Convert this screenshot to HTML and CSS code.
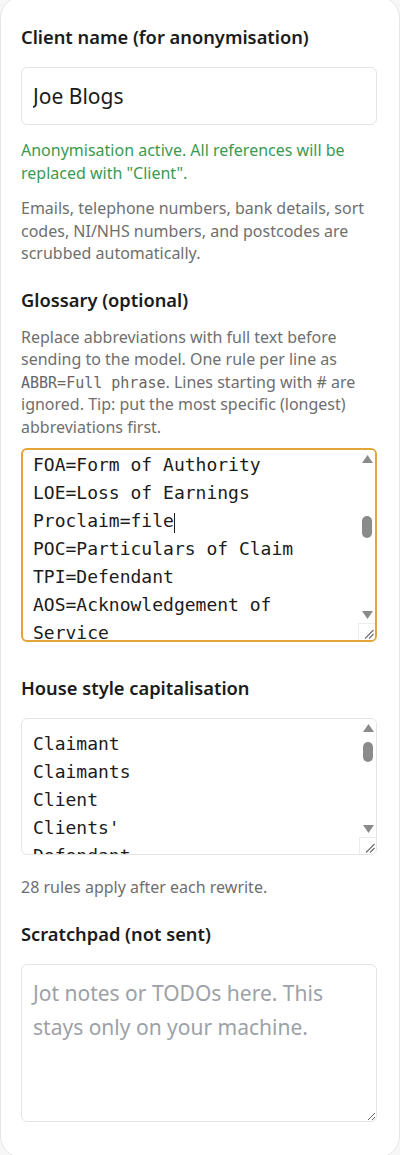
FILE: index.html
```html
<!DOCTYPE html>
<html lang="en">
<head>
<meta charset="utf-8">
<title>Settings</title>
<link rel="stylesheet" href="styles.css">
</head>
<body>
<div class="card">
  <section class="field">
    <label class="label" for="client">Client name (for anonymisation)</label>
    <input id="client" class="input" type="text" value="Joe Blogs">
    <p class="note note-ok">Anonymisation active. All references will be replaced with "Client".</p>
    <p class="note">Emails, telephone numbers, bank details, sort codes, NI/NHS numbers, and postcodes are scrubbed automatically.</p>
  </section>

  <section class="field field-glossary">
    <label class="label label-desc" for="glossary">Glossary (optional)</label>
    <p class="note desc">Replace abbreviations with full text before sending to the model. One rule per line as <code class="code">ABBR=Full phrase</code>. Lines starting with # are ignored. Tip: put the most specific (longest) abbreviations first.</p>
    <div class="box box-focus glossary">
      <textarea id="glossary" class="area area-mono" spellcheck="false"># Case abbreviations
CL=Claimant
CLs=Claimants
D=Defendant
Ds=Defendants
RTA=Road Traffic Accident
PI=Personal Injury
CNF=Claim Notification Form
LOC=Letter of Claim
LOR=Letter of Response
CPR=Civil Procedure Rules
DQ=Directions Questionnaire
CMC=Case Management
ATE=After the Event
GP=General Practitioner
MR=Medical Report
TP=Third Party
WS=Witness Statement
SOC=Statement of Case
DOI=Date of Incident
FOA=Form of Authority
LOE=Loss of Earnings
Proclaim=file
POC=Particulars of Claim
TPI=Defendant
AOS=Acknowledgement of Service
DJ=District Judge
CJ=Circuit Judge
SCO=Schedule of Costs
NOD=Notice of Discontinuance
NOI=Notice of Issue
OTS=Offer to Settle
P36=Part 36 Offer
PTR=Pre-Trial Review
LIP=Litigant in Person
MOJ=Ministry of Justice
CRU=Compensation Recovery Unit
NHS=National Health Service
A&amp;E=Accident and Emergency
TOM=Tomlin Order
CO=Consent Order
DOB=Date of Birth
DOK=Date of Knowledge
LOA=Letter of Acceptance
ROR=Request for Records
</textarea>
      <span class="caret"></span>
      <div class="sbar" aria-hidden="true">
        <span class="sbar-btn"><svg width="11" height="8" viewBox="0 0 11 8"><polygon points="0,8 5.5,0 11,8" fill="#8b8b8b"/></svg></span>
        <span class="sbar-track"><span class="sbar-thumb thumb-glossary"></span></span>
        <span class="sbar-btn"><svg width="11" height="8" viewBox="0 0 11 8"><polygon points="0,0 11,0 5.5,8" fill="#8b8b8b"/></svg></span>
        <span class="sbar-corner"><svg width="17" height="17" viewBox="0 0 17 17"><path d="M7 15.5 L15.5 7 M11 15.5 L15.5 11" stroke="#6e6e6e" stroke-width="1.1" fill="none"/></svg></span>
      </div>
    </div>
  </section>

  <section class="field">
    <label class="label" for="house">House style capitalisation</label>
    <div class="box house">
      <textarea id="house" class="area area-mono" spellcheck="false">Claimant
Claimants
Client
Clients'
Defendant
Defendants
Defendant's
Claimant's
Court
Judge
District Judge
Circuit Judge
Tribunal
Insurer
Insurers
Solicitor
Solicitors
Counsel
Expert
Experts
Particulars of Claim
Defence
Reply
Order
Schedule
Counter-Schedule
Part 36
Civil Procedure Rules</textarea>
      <div class="sbar" aria-hidden="true">
        <span class="sbar-btn"><svg width="11" height="8" viewBox="0 0 11 8"><polygon points="0,8 5.5,0 11,8" fill="#8b8b8b"/></svg></span>
        <span class="sbar-track"><span class="sbar-thumb thumb-house"></span></span>
        <span class="sbar-btn"><svg width="11" height="8" viewBox="0 0 11 8"><polygon points="0,0 11,0 5.5,8" fill="#8b8b8b"/></svg></span>
        <span class="sbar-corner"><svg width="17" height="17" viewBox="0 0 17 17"><path d="M7 15.5 L15.5 7 M11 15.5 L15.5 11" stroke="#6e6e6e" stroke-width="1.1" fill="none"/></svg></span>
      </div>
    </div>
    <p class="note count">28 rules apply after each rewrite.</p>
  </section>

  <section class="field">
    <label class="label" for="scratch">Scratchpad (not sent)</label>
    <textarea id="scratch" class="scratch" placeholder="Jot notes or TODOs here. This stays only on your machine."></textarea>
  </section>
</div>
<script src="script.js"></script>
</body>
</html>
```

FILE: styles.css
```css
* { box-sizing: border-box; }

html, body {
  margin: 0;
  padding: 0;
  background: #f7f7f7;
}

body {
  font-family: "Noto Sans", "Open Sans", sans-serif;
  color: #1b1b1b;
  height: 1155px;
  overflow: hidden;
}

.card {
  background: #fff;
  border: 1px solid #e6e6e6;
  border-radius: 22px;
  margin: -4px 0 0 0;
  width: 400px;
  min-height: 1162px;
  padding: 28px 22px 0 20px;
}

.field { margin: 0 0 23px 0; }
.field-glossary { margin-bottom: 34px; }

.label {
  display: block;
  font-size: 18.3px;
  font-weight: 600;
  line-height: 24px;
  margin: 0 0 18px 0;
}

.label-desc { margin-bottom: 14px; }

.input {
  display: block;
  width: 100%;
  height: 58px;
  border: 1px solid #e4e4e4;
  border-radius: 6px;
  padding: 0 11px;
  font-family: "Noto Sans", "Open Sans", sans-serif;
  font-size: 21px;
  color: #1b1b1b;
  background: #fff;
  outline: none;
}

.note {
  margin: 0;
  font-size: 16px;
  line-height: 22.5px;
  color: #6f6f6f;
}

.note-ok {
  color: #3a9a52;
  margin: 14px 0 13px 0;
}

.desc { margin-bottom: 10px; }

.code {
  font-family: "DejaVu Sans Mono", monospace;
  font-size: 15px;
  line-height: 1;
  color: #666;
}

.count { margin-top: 21px; }

/* textarea with drawn scrollbar */
.box {
  position: relative;
  display: flex;
  width: 100%;
  border: 1px solid #e4e4e4;
  border-radius: 6px;
  background: #fff;
  overflow: hidden;
}

.box-focus { border: 2px solid #e3a43a; }

.glossary { height: 194px; }
.house { height: 137px; }

.area {
  flex: 1;
  min-width: 0;
  height: 100%;
  margin: 0;
  border: 0;
  padding: 11px 6px 11px 11px;
  background: transparent;
  color: #1b1b1b;
  outline: none;
  resize: none;
  overflow: hidden;
}

.box-focus .area { padding: 10px 6px 10px 10px; }

.area-mono {
  font-family: "DejaVu Sans Mono", "Liberation Mono", monospace;
  font-size: 18px;
  line-height: 28px;
}

.caret {
  position: absolute;
  left: 151px;
  top: 63px;
  width: 1px;
  height: 20px;
  background: #1b1b1b;
}

.sbar {
  flex: 0 0 16px;
  display: flex;
  flex-direction: column;
  background: #fff;
}

.sbar-btn {
  flex: 0 0 17px;
  display: flex;
  align-items: center;
  justify-content: center;
}

.sbar-track {
  flex: 1;
  display: flex;
  flex-direction: column;
  align-items: center;
}

.sbar-thumb {
  display: block;
  width: 10px;
  border-radius: 5px;
  background: #8b8b8b;
}

.thumb-glossary { margin-top: 49px; height: 22px; }
.thumb-house { margin-top: 6px; height: 20px; }

.sbar-corner {
  flex: 0 0 17px;
  display: block;
  border-top: 1px solid #ececec;
  border-left: 1px solid #ececec;
  margin-left: -1px;
  width: 17px;
}

.sbar-corner svg { display: block; margin: -1px 0 0 -1px; }

.scratch {
  display: block;
  width: 100%;
  height: 158px;
  margin: 0;
  border: 1px solid #e4e4e4;
  border-radius: 6px;
  padding: 11px;
  background: #fff;
  color: #1b1b1b;
  outline: none;
  resize: vertical;
  font-family: "Noto Sans", "Open Sans", sans-serif;
  font-size: 21px;
  line-height: 34px;
}

.scratch::placeholder { color: #9da1a6; }
```

FILE: script.js
```js
var g = document.getElementById('glossary');
g.scrollTop = 10 + 20 * 28 - 1;
```
